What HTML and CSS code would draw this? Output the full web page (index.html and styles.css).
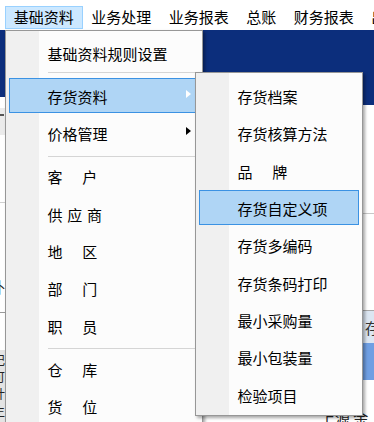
FILE: index.html
```html
<!DOCTYPE html>
<html lang="zh-CN">
<head>
<meta charset="utf-8">
<title>基础资料</title>
<link rel="stylesheet" href="styles.css">
</head>
<body>
<div class="app">
  <div class="menubar">
    <span class="mb-item active">基础资料</span>
    <span class="mb-item">业务处理</span>
    <span class="mb-item">业务报表</span>
    <span class="mb-item">总账</span>
    <span class="mb-item">财务报表</span>
    <span class="mb-item">出纳管理</span>
  </div>
  <div class="workspace">
    <div class="pane-left">
      <div class="lp-banner"></div>
      <div class="lp-gap"></div>
      <div class="lp-toolbar"><span class="lp-dash"></span></div>
      <div class="lp-list"></div>
      <div class="lp-form"><span class="lp-char">补</span></div>
      <div class="lp-white"></div>
      <div class="lp-grid">
        <span class="lp-char small">记</span>
        <span class="lp-char small">可</span>
        <span class="lp-char small">计</span>
        <span class="lp-char small">生</span>
      </div>
    </div>
    <div class="pane-right">
      <div class="rp-banner"></div>
      <div class="rp-area1"></div>
      <div class="rp-area2"></div>
      <div class="rp-header"><span class="rp-head-text">存货编码</span></div>
      <div class="rp-row"></div>
      <div class="rp-foot">上源&nbsp;余</div>
    </div>
  </div>

  <div class="menu menu-main">
    <div class="mi"><span class="mi-label">基础资料规则设置</span></div>
    <div class="msep first"></div>
    <div class="mi hot"><span class="mi-label">存货资料</span><svg class="mi-arrow" viewBox="0 0 5 8"><polygon points="0,0 5,4 0,8" fill="currentColor"/></svg></div>
    <div class="mi"><span class="mi-label">价格管理</span><svg class="mi-arrow" viewBox="0 0 5 8"><polygon points="0,0 5,4 0,8" fill="currentColor"/></svg></div>
    <div class="msep"></div>
    <div class="mi"><span class="mi-label sp2">客户</span></div>
    <div class="mi"><span class="mi-label sp3">供应商</span></div>
    <div class="mi"><span class="mi-label sp2">地区</span></div>
    <div class="mi"><span class="mi-label sp2">部门</span></div>
    <div class="mi"><span class="mi-label sp2">职员</span></div>
    <div class="msep"></div>
    <div class="mi"><span class="mi-label sp2">仓库</span></div>
    <div class="mi"><span class="mi-label sp2">货位</span></div>
  </div>

  <div class="menu menu-sub">
    <div class="mi"><span class="mi-label">存货档案</span></div>
    <div class="mi"><span class="mi-label">存货核算方法</span></div>
    <div class="mi"><span class="mi-label sp2">品牌</span></div>
    <div class="mi hot"><span class="mi-label">存货自定义项</span></div>
    <div class="mi"><span class="mi-label">存货多编码</span></div>
    <div class="mi"><span class="mi-label">存货条码打印</span></div>
    <div class="mi"><span class="mi-label">最小采购量</span></div>
    <div class="mi"><span class="mi-label">最小包装量</span></div>
    <div class="mi"><span class="mi-label">检验项目</span></div>
  </div>
</div>
</body>
</html>
```

FILE: styles.css
```css
* { box-sizing: border-box; }
html, body { margin: 0; padding: 0; }
body {
  width: 374px;
  height: 422px;
  overflow: hidden;
  font-family: "Noto Sans CJK SC", "Noto Sans", sans-serif;
  font-size: 15px;
  color: #000;
  background: #fff;
}
.app {
  position: relative;
  width: 374px;
  height: 422px;
  overflow: hidden;
  display: flex;
  flex-direction: column;
}

/* menu bar */
.menubar {
  height: 30px;
  flex: none;
  display: flex;
  align-items: flex-start;
  padding: 6px 0 0 5px;
  background: #fff;
  white-space: nowrap;
  overflow: hidden;
}
.mb-item {
  flex: none;
  height: 23px;
  display: flex;
  align-items: center;
  padding: 0 7.75px 2px;
  border: 1px solid transparent;
  line-height: 1;
}
.mb-item.active {
  background: #cce8ff;
  border-color: #99d1ff;
}

/* background workspace */
.workspace {
  flex: 1;
  min-height: 0;
  display: flex;
}
.pane-left {
  width: 200px;
  flex: none;
  display: flex;
  flex-direction: column;
  overflow: hidden;
}
.lp-banner { height: 67px; flex: none; background: #0c2e7c; }
.lp-gap { height: 11px; flex: none; background: #fff; }
.lp-toolbar {
  height: 27px;
  flex: none;
  background: #ebebeb;
  padding-top: 6px;
}
.lp-dash { display: block; width: 4px; height: 2px; background: #555; }
.lp-list { height: 68px; flex: none; border-bottom: 1px solid #d0d0d0; }
.lp-form {
  height: 110px;
  flex: none;
  border-bottom: 1px solid #9a9a9a;
  padding-top: 76px;
}
.lp-char {
  display: block;
  margin-left: -10px;
  line-height: 16px;
  font-size: 15px;
  color: #222;
}
.lp-char.small { font-size: 12px; line-height: 17px; margin-left: -7px; }
.lp-white { height: 37px; flex: none; }
.lp-grid { flex: 1; background: #e4e4e4; padding-top: 1px; }

.pane-right {
  flex: 1;
  display: flex;
  flex-direction: column;
}
.rp-banner { height: 75px; flex: none; background: #0c2e7c; }
.rp-area1 { height: 109px; flex: none; border-bottom: 1px solid #c8c8c8; }
.rp-area2 { height: 97px; flex: none; border-bottom: 1px solid #a8a8a8; }
.rp-header {
  height: 32px;
  flex: none;
  background: #dce6f2;
  display: flex;
  align-items: center;
  padding-left: 165px;
  white-space: nowrap;
  color: #333;
}
.rp-row { height: 37px; flex: none; background: #6f9fe3; }
.rp-foot {
  flex: 1;
  padding: 30px 0 0 120px;
  line-height: 16px;
  white-space: nowrap;
  color: #222;
}

/* popup menus */
.menu {
  position: absolute;
  display: flex;
  flex-direction: column;
  border: 1px solid #979797;
  background: linear-gradient(to right, #f0f0f0 33px, #fcfcfc 33px);
  box-shadow: 2px 2px 3px rgba(0, 0, 0, 0.35);
  padding: 4px 3px;
}
.menu-main { left: 5px; top: 30px; width: 198px; }
.menu-sub { left: 195px; top: 72px; width: 168px; padding: 5px 3px 1px; }

.mi {
  flex: none;
  height: 35.3px;
  margin-bottom: 2px;
  padding: 2px 7px 0 37.5px;
  border: 1px solid transparent;
  display: flex;
  align-items: center;
  white-space: nowrap;
  line-height: 1;
  color: #000;
}
.mi.hot {
  background: #afd5f5;
  border-color: #3b92e3;
}
.mi-label { flex: 1; }
.mi-arrow {
  flex: none;
  width: 5px;
  height: 8px;
  margin-bottom: 6px;
  color: #000;
}
.mi.hot .mi-arrow { color: #fff; }
.sp2 { letter-spacing: 19.7px; }
.sp3 { letter-spacing: 4.7px; }

.msep { flex: none; height: 5.7px; padding-top: 3px; }
.msep.first { padding-top: 0; }
.msep::before {
  content: "";
  display: block;
  height: 1px;
  background: #d5d5d5;
  margin-left: 38.5px;
}
```
